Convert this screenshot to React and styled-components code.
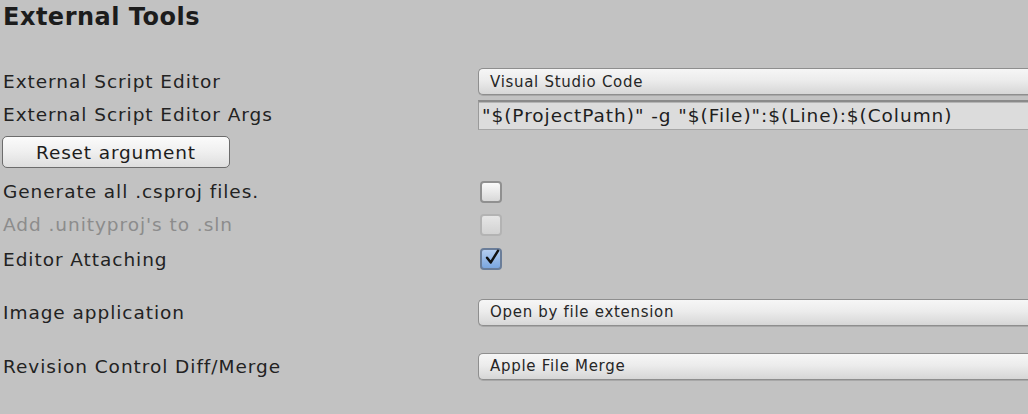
import React from "react"
import styled, { createGlobalStyle } from "styled-components"

const GlobalStyle = createGlobalStyle`
  html, body {
    margin: 0;
    padding: 0;
    background: #c2c2c2;
    overflow: hidden;
  }
  body {
    font-family: "DejaVu Sans", "Liberation Sans", sans-serif;
    color: #222;
  }
`

const Page = styled.div`
  width: 1028px;
  height: 414px;
  padding: 1px 0 0 3px;
  box-sizing: border-box;
  overflow: hidden;
`

const Title = styled.h2`
  margin: 0;
  height: 32px;
  line-height: 32px;
  font-size: 24px;
  font-weight: bold;
  letter-spacing: 0.5px;
  color: #1c1c1c;
`

const Row = styled.div`
  display: grid;
  grid-template-columns: 475px 1fr;
  align-items: center;
  height: ${(p) => p.$h}px;
  margin-top: ${(p) => p.$mt || 0}px;
`

const Label = styled.span`
  font-size: 18.5px;
  letter-spacing: 0.95px;
  white-space: nowrap;
  color: ${(p) => (p.$disabled ? "#8c8c8c" : "#222")};
`

const Popup = styled.div`
  width: 580px;
  height: 27px;
  box-sizing: border-box;
  border: 1px solid #8e8e8e;
  border-right: none;
  border-radius: 5px 0 0 5px;
  background: linear-gradient(#f6f6f6 0%, #ececec 45%, #d6d6d6 100%);
  box-shadow: 0 1px 0 #a8a8a8;
  padding-left: 11px;
  display: flex;
  align-items: center;
  font-size: 15px;
  letter-spacing: 0.7px;
  color: #262626;
  white-space: nowrap;
`

const TextField = styled.div`
  width: 580px;
  height: 30px;
  box-sizing: border-box;
  border-top: 2px solid #8a8a8a;
  border-left: 1px solid #9a9a9a;
  border-bottom: 1px solid #a6a6a6;
  background: #dcdcdc;
  box-shadow: inset 0 1px 0 #b4b4b4;
  padding-left: 3px;
  display: flex;
  align-items: center;
  font-size: 18.5px;
  letter-spacing: 0.95px;
  color: #1e1e1e;
  white-space: nowrap;
`

const Button = styled.button`
  width: 228px;
  height: 32px;
  margin-left: -1px;
  border: 1px solid #6c6c6c;
  border-radius: 5px;
  background: linear-gradient(#fbfbfb 0%, #efefef 50%, #dedede 100%);
  font-family: "DejaVu Sans", "Liberation Sans", sans-serif;
  font-size: 18.5px;
  letter-spacing: 0.85px;
  color: #1c1c1c;
  padding: 0;
`

const Box = styled.div`
  width: 22px;
  height: 22px;
  margin-left: 2px;
  box-sizing: border-box;
  border-radius: 4px;
  border: 2px solid
    ${(p) => (p.$checked ? "#6a7d99" : p.$disabled ? "#b3b3b3" : "#909090")};
  background: ${(p) =>
    p.$checked
      ? "linear-gradient(#b4cdf0, #7aa6e0)"
      : p.$disabled
      ? "linear-gradient(#e6e6e6, #d2d2d2)"
      : "linear-gradient(#fafafa, #d8d8d8)"};
  display: flex;
  align-items: center;
  justify-content: center;
`

const Check = () => (
  <svg width="22" height="22" viewBox="0 0 22 22" style={{ marginTop: -5, marginLeft: 3 }}>
    <path
      d="M3 12 L8.5 19 L19 2"
      fill="none"
      stroke="#111"
      strokeWidth="3.6"
      strokeLinecap="round"
      strokeLinejoin="round"
    />
  </svg>
)

const App = () => (
  <>
    <GlobalStyle />
    <Page>
      <Title>External Tools</Title>
      <Row $h={31} $mt={33}>
        <Label>External Script Editor</Label>
        <Popup>Visual Studio Code</Popup>
      </Row>
      <Row $h={35}>
        <Label>External Script Editor Args</Label>
        <TextField>"$(ProjectPath)" -g "$(File)":$(Line):$(Column)</TextField>
      </Row>
      <Row $h={34} $mt={3}>
        <Button>Reset argument</Button>
      </Row>
      <Row $h={33} $mt={6}>
        <Label>Generate all .csproj files.</Label>
        <Box />
      </Row>
      <Row $h={33}>
        <Label $disabled>Add .unityproj's to .sln</Label>
        <Box $disabled />
      </Row>
      <Row $h={34} $mt={1}>
        <Label>Editor Attaching</Label>
        <Box $checked>
          <Check />
        </Box>
      </Row>
      <Row $h={32} $mt={20}>
        <Label>Image application</Label>
        <Popup>Open by file extension</Popup>
      </Row>
      <Row $h={32} $mt={22}>
        <Label>Revision Control Diff/Merge</Label>
        <Popup>Apple File Merge</Popup>
      </Row>
    </Page>
  </>
)

export default App
